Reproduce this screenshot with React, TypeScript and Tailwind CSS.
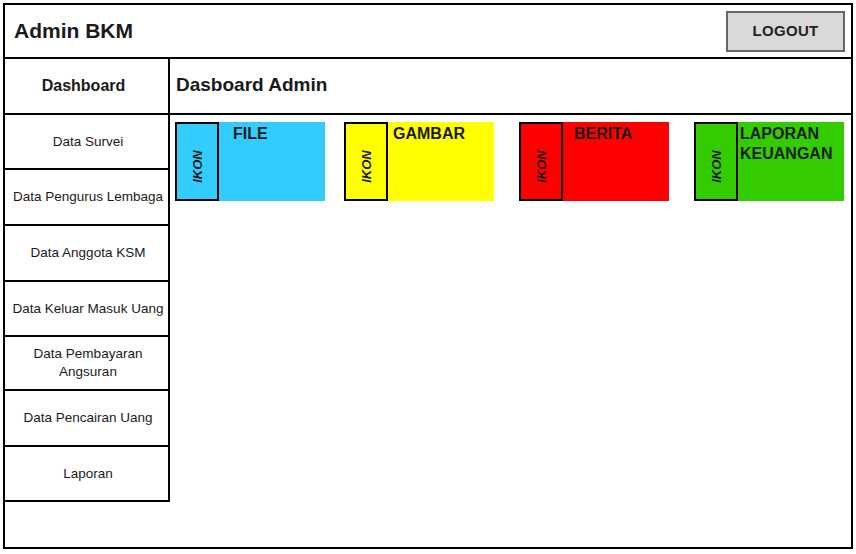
import React from 'react';

const menu = [
  { label: 'Data Survei', h: 'h-[55px]' },
  { label: 'Data Pengurus Lembaga', h: 'h-[56px]' },
  { label: 'Data Anggota KSM', h: 'h-[56px]' },
  { label: 'Data Keluar Masuk Uang', h: 'h-[55px]' },
  { label: 'Data Pembayaran Angsuran', h: 'h-[54px]', wrap: true },
  { label: 'Data Pencairan Uang', h: 'h-[56px]' },
  { label: 'Laporan', h: 'h-[55px]' },
];

const cards = [
  { title: ['FILE'], bg: 'bg-[#33ccff]', ml: 'ml-0', pl: 'pl-[14px]' },
  { title: ['GAMBAR'], bg: 'bg-[#ffff00]', ml: 'ml-[19px]', pl: 'pl-[5px]' },
  { title: ['BERITA'], bg: 'bg-[#ff0000]', ml: 'ml-[25px]', pl: 'pl-[11px]' },
  { title: ['LAPORAN', 'KEUANGAN'], bg: 'bg-[#33cc00]', ml: 'ml-[25px]', pl: 'pl-[2px]' },
];

export default function App() {
  return (
    <div className="w-[856px] h-[554px] bg-white pt-[3px] pl-[3px] text-[#1a1a1a] font-['Liberation_Sans',Arial,sans-serif]">
      <div className="w-[850px] h-[546px] border-2 border-black flex flex-col">
        {/* header */}
        <div className="h-[54px] shrink-0 border-b-2 border-black flex items-center justify-between pl-[9px] pr-[6px]">
          <h1 className="text-[21px] font-bold">Admin BKM</h1>
          <button className="w-[119px] h-[41px] bg-[#d9d9d9] border-2 border-[#666] text-[15px] font-bold text-[#222] tracking-[0.3px]">
            LOGOUT
          </button>
        </div>

        <div className="flex flex-1">
          {/* sidebar */}
          <div className="w-[165px] shrink-0 flex flex-col">
            <div className="h-[56px] border-r-2 border-b-2 border-black flex items-center justify-center text-[16px] font-bold pr-[6px]">
              Dashboard
            </div>
            {menu.map((m) => (
              <div
                key={m.label}
                className={`${m.h} border-r-2 border-b-2 border-black flex items-center justify-center text-center text-[13.5px] leading-[18px] pl-[3px]`}
              >
                {m.wrap ? (
                  <span>
                    Data Pembayaran
                    <br />
                    Angsuran
                  </span>
                ) : (
                  m.label
                )}
              </div>
            ))}
          </div>

          {/* main */}
          <div className="flex-1 flex flex-col">
            <div className="h-[56px] border-b-2 border-black flex items-center pl-[6px] pb-[2px]">
              <h2 className="text-[19px] font-bold">Dasboard Admin</h2>
            </div>
            <div className="flex pl-[5px] pt-[7px]">
              {cards.map((c) => (
                <div key={c.title[0]} className={`${c.ml} ${c.bg} w-[150px] h-[79px] flex`}>
                  <div className="w-[44px] h-full border-2 border-black flex items-center justify-center pt-[9px]">
                    <span className="-rotate-90 italic text-[13px] font-bold leading-none whitespace-nowrap">IKON</span>
                  </div>
                  <div className={`${c.pl} pt-[2px] text-[16px] font-bold leading-[20px]`}>
                    {c.title.map((t) => (
                      <div key={t}>{t}</div>
                    ))}
                  </div>
                </div>
              ))}
            </div>
          </div>
        </div>
      </div>
    </div>
  );
}
